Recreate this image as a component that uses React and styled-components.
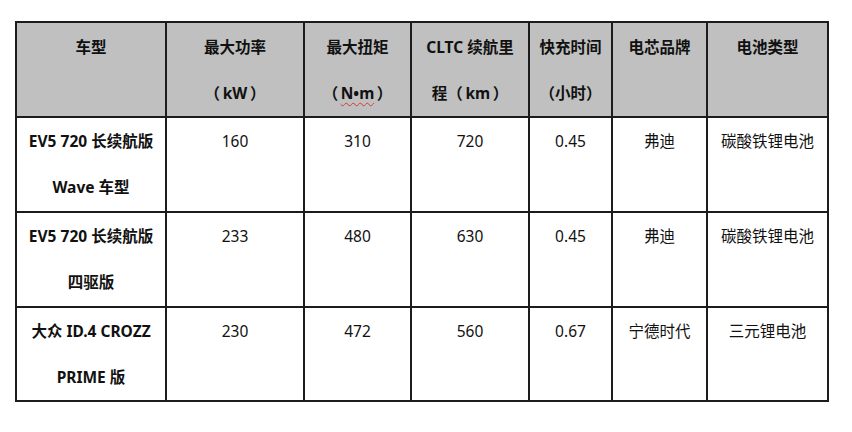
import React from 'react';
import styled, { createGlobalStyle } from 'styled-components';

const GlobalStyle = createGlobalStyle`
  html, body {
    margin: 0;
    padding: 0;
    background: #ffffff;
  }
  body {
    font-family: "Noto Sans", "Noto Sans CJK SC", sans-serif;
    color: #111;
  }
`;

const Page = styled.div`
  width: 852px;
  height: 432px;
  box-sizing: border-box;
  padding: 21px 0 0 15px;
`;

const Table = styled.table`
  border-collapse: collapse;
  table-layout: fixed;
  width: 812px;
  font-size: 15.5px;
`;

const HeadRow = styled.tr`
  height: 95px;
`;

const BodyRow = styled.tr`
  height: ${(p) => p.$h}px;
`;

const HeadCell = styled.th`
  background: #c0c0c0;
  border: 2px solid #1c1c1c;
  padding: 1px 0 0;
  font-weight: 700;
  line-height: 46px;
  text-align: center;
  vertical-align: top;
  white-space: nowrap;
`;

const Cell = styled.td`
  border: 2px solid #1c1c1c;
  padding: 0;
  font-weight: ${(p) => (p.$bold ? 700 : 400)};
  line-height: 46px;
  text-align: center;
  vertical-align: top;
  white-space: nowrap;
`;

const Squiggle = styled.span`
  text-decoration: underline wavy #d23a3a;
  text-decoration-thickness: 1px;
  text-underline-offset: 3px;
`;

const widths = [150, 138, 107, 118, 83, 95, 121];

const rows = [
  { name: ['EV5 720 长续航版', 'Wave 车型'], vals: ['160', '310', '720', '0.45', '弗迪', '碳酸铁锂电池'], h: 95 },
  { name: ['EV5 720 长续航版', '四驱版'], vals: ['233', '480', '630', '0.45', '弗迪', '碳酸铁锂电池'], h: 95 },
  { name: ['大众 ID.4 CROZZ', 'PRIME 版'], vals: ['230', '472', '560', '0.67', '宁德时代', '三元锂电池'], h: 92 },
];

export default function App() {
  return (
    <>
      <GlobalStyle />
      <Page>
        <Table>
          <colgroup>
            {widths.map((w, i) => (
              <col key={i} style={{ width: w }} />
            ))}
          </colgroup>
          <thead>
            <HeadRow>
              <HeadCell>车型</HeadCell>
              <HeadCell>最大功率<br />（{'\u2009'}kW{'\u2009'}）</HeadCell>
              <HeadCell>最大扭矩<br />（{'\u2009'}<Squiggle>N•m</Squiggle>{'\u2009'}）</HeadCell>
              <HeadCell>CLTC 续航里<br />程（{'\u2009'}km{'\u2009'}）</HeadCell>
              <HeadCell>快充时间<br />（小时）</HeadCell>
              <HeadCell>电芯品牌</HeadCell>
              <HeadCell>电池类型</HeadCell>
            </HeadRow>
          </thead>
          <tbody>
            {rows.map((r, i) => (
              <BodyRow key={i} $h={r.h}>
                <Cell $bold>
                  {r.name[0]}
                  <br />
                  {r.name[1]}
                </Cell>
                {r.vals.map((v, j) => (
                  <Cell key={j}>{v}</Cell>
                ))}
              </BodyRow>
            ))}
          </tbody>
        </Table>
      </Page>
    </>
  );
}
